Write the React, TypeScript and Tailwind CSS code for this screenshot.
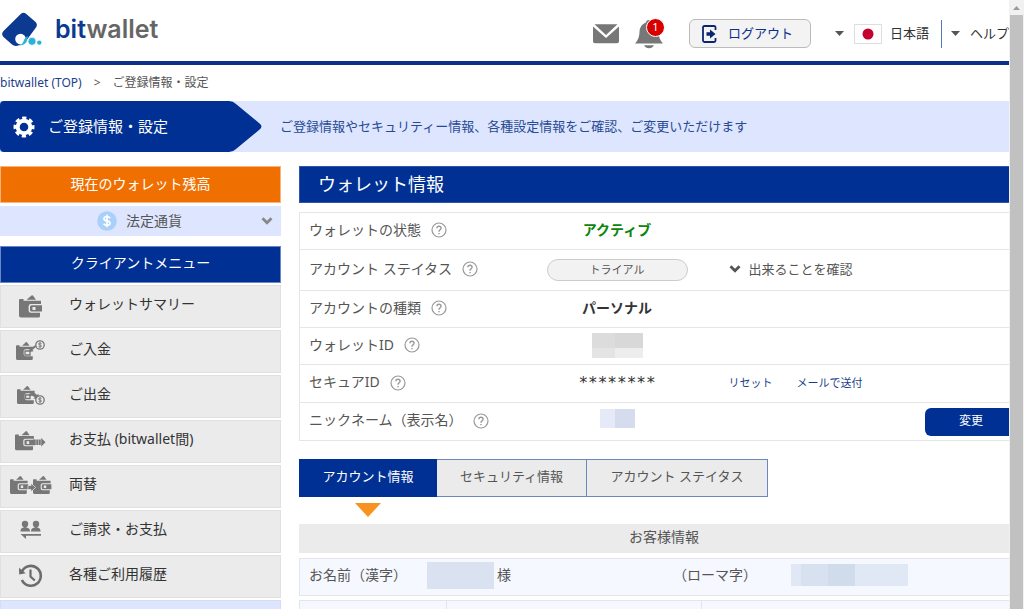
import React from "react";

const Wallet = ({ x = 0, y = 0, s = 1, notch = true }: { x?: number; y?: number; s?: number; notch?: boolean }) => (
  <g transform={`translate(${x} ${y}) scale(${s})`}>
    <path d="M7.500 4.800 12.500.4q.8-.6 1.400.2L17 4.800z" fill="#777" />
    <path d="M1 4H4.500V5.800H22V9H12q-2.400 0-2.400 2.400v4Q9.600 17.800 12 17.800H21V21q0 1.500-1.500 1.500H2Q0 22.500 0 20.500V5Q0 4 1 4z" fill="#777" />
    {notch && <path fillRule="evenodd" d="M12.500 10.300H23v6.300H12.500q-1.500 0-1.500-1.500v-3.300q0-1.500 1.500-1.500zM13.500 12v3h3v-3z" fill="#777" />}
  </g>
);

const Coin = ({ x, y }: { x: number; y: number }) => (
  <g transform={`translate(${x} ${y})`} fill="none" stroke="#777">
    <circle r="4.200" fill="#ebebeb" strokeWidth="1.300" />
    <path d="M1.500-1.400Q0-2.600-1.200-1.600-2-.4 0 0 2 .5 1.200 1.600 0 2.600-1.500 1.400M0-2.800V2.800" strokeWidth=".9" />
  </g>
);

const icons: Record<string, React.ReactNode> = {
  summary: <Wallet x={19} y={10} />,
  deposit: (
    <>
      <Wallet x={16} y={12} s={0.8} notch={false} />
      <path d="M25 21h5v4h-5z" fill="none" stroke="#777" strokeWidth="1.300" />
      <path d="m29 22 1-5 1.200 1.300 4.200-3.400 1.200 1.500-4.200 3.400 1.200 1.500z" fill="#777" />
      <Coin x={40} y={15} />
    </>
  ),
  withdraw: (
    <>
      <Wallet x={17} y={11} s={0.8} notch={false} />
      <path d="M25.500 20h4.500v3.500h-4.500z" fill="none" stroke="#777" strokeWidth="1.300" />
      <path d="M29 19q5-3 8 1l1.500-1.300.3 5.500-5.500-.6 1.500-1.400q-2.300-2.600-5.800-.7z" fill="#777" />
      <Coin x={40} y={25} />
    </>
  ),
  payment: (
    <>
      <Wallet x={15} y={11} s={0.86} />
      <path d="M33 19.500h8v-1.700l4.500 4.500-4.500 4.500v-1.700h-8z" fill="#777" />
      <path d="M36 19v7M38.500 19v7M41 18v9" stroke="#ebebeb" strokeWidth=".5" />
    </>
  ),
  exchange: (
    <>
      <Wallet x={10} y={11} s={0.8} />
      <Wallet x={33} y={11} s={0.8} />
      <path d="M28 20.500h3v-2.300l4.600 4.300-4.600 4.300v-2.300h-3z" fill="#777" stroke="#ebebeb" strokeWidth=".7" />
    </>
  ),
  billing: (
    <g fill="#777">
      <circle cx="25" cy="14" r="3.200" />
      <path d="M23.700 16h2.600v1.600q4 .7 3.700 3.900H20.500q-.3-3.200 3.200-3.900z" />
      <circle cx="36" cy="14" r="3.200" />
      <path d="M34.700 16h2.600v1.600q3.500.7 3.200 3.900H31q-.3-3.200 3.700-3.900zM20.500 24H41v1.800H26V29z" />
    </g>
  ),
  history: (
    <g fill="none" stroke="#6c6c6c" strokeWidth="2.600">
      <path d="M21.700 17.200A9.900 9.900 0 1 1 21.900 25" />
      <path d="m19 12.800.2 6.800 6.500-1.400z" fill="#6c6c6c" stroke="none" />
      <path d="M30.500 14.500v7l4.300 4" strokeWidth="2.200" />
    </g>
  ),
};

const menu = [
  ["summary", "ウォレットサマリー"],
  ["deposit", "ご入金"],
  ["withdraw", "ご出金"],
  ["payment", "お支払 (bitwallet間)"],
  ["exchange", "両替"],
  ["billing", "ご請求・お支払"],
  ["history", "各種ご利用履歴"],
];

const Help = () => (
  <button type="button" aria-label="ヘルプ" className="ml-2.5 inline-block align-middle">
    <svg width="16" height="16" viewBox="0 0 16 16" fill="none" stroke="#999" className="block">
      <circle cx="8" cy="8" r="7" strokeWidth="1.200" />
      <path d="M5.900 6.300Q6 4.200 8 4.200t2.100 1.900Q10.100 7.200 9 7.900 8 8.500 8 9.700M8 10.900v1.300" strokeWidth="1.400" />
    </svg>
  </button>
);

const Chevron = ({ color }: { color: string }) => (
  <svg width="12" height="8" viewBox="0 0 12 8" fill="none" stroke={color} strokeWidth="2.800">
    <path d="m1.500 1.300 4.500 4.500 4.500-4.500" />
  </svg>
);

const Caret = () => (
  <svg width="9" height="5" viewBox="0 0 9 5" fill="#555">
    <path d="M0 0h9L4.500 5z" />
  </svg>
);

const Row = ({ label, h, children, extra }: { label: string; h: string; children?: React.ReactNode; extra?: React.ReactNode }) => (
  <tr className={`border-b border-[#e6e6e6] ${h}`}>
    <th scope="row" className="pt-0 pb-[3px] pl-[9px] text-left font-normal whitespace-nowrap">
      <span className="align-middle">{label}</span>
      <Help />
    </th>
    <td className="pt-0 pb-0.5 text-center">{children}</td>
    <td className="pt-0 pr-[11px] pb-0.5 pl-[41px]">{extra}</td>
  </tr>
);

export default function App() {
  return (
    <div
      lang="ja"
      className="flex h-screen overflow-hidden bg-white font-['Noto_Sans','Noto_Sans_CJK_JP',sans-serif] text-sm leading-5 text-[#555]"
    >
      <div className="min-w-0 flex-1 overflow-hidden">
        <div className="min-w-[1029px]">
          <header className="flex h-[65px] items-center border-b-4 border-[#0c2f8c] pr-5 pb-1">
            <a href="#top" className="flex items-center" aria-label="bitwallet">
              <svg width="42" height="36" viewBox="0 0 42 36">
                <path d="M21 2.700Q23.500 1 26 2.700L35 10.500Q38 13 36.300 16L26 30 19.500 34Q15 36 12 33.500L3.500 26Q.8 23 3.500 20z" fill="#0b3a90" />
                <circle cx="20.500" cy="28" r="5.300" fill="#fff" />
                <path d="M18.500 34.500q4.500-1 5.500-5.500.8-3 4-4l-1.500 6q-2.500 3.500-8 3.500z" fill="#2db1d8" />
                <circle cx="32" cy="30.300" r="4" fill="#2db1d8" stroke="#fff" strokeWidth=".7" />
                <circle cx="39.300" cy="31.600" r="2.200" fill="#2db1d8" />
              </svg>
              <span className="ml-[13px] font-['Inter',sans-serif] text-[25px] leading-8 font-semibold text-[#666]">
                <span className="text-[#0b3a90]">bit</span>wallet
              </span>
            </a>
            <div className="ml-auto flex items-center pt-2.5">
              <a href="#mail" aria-label="メール">
                <svg width="26" height="20" viewBox="0 0 26 20" fill="#777">
                  <path d="M1.500.3H24.500L13 11zM0 2.500 13 14 26 2.500V17.500Q26 19.300 24 19.300H2Q0 19.300 0 17.500z" />
                </svg>
              </a>
              <a href="#notices" aria-label="お知らせ" className="relative ml-4">
                <svg width="28" height="30" viewBox="0 0 28 30" fill="#777">
                  <path d="M14 1Q17 1 17 3.500 23.500 6 23.500 13 23.500 20 28 24.500H0Q4.500 20 4.500 13 4.500 6 11 3.500 11 1 14 1zM9 26.300H19Q17.500 29.300 14 29.300T9 26.300z" />
                </svg>
                <span className="absolute -top-px left-[11px] flex size-[19px] items-center justify-center rounded-full border border-white bg-[#d90000] text-[11px] leading-3 text-white">
                  1
                </span>
              </a>
              <button
                type="button"
                className="ml-[26px] flex h-[29px] w-[122px] items-center rounded-md border border-[#bbb] bg-[#f3f3f3] pl-3 text-[13px] text-[#0c2f8c]"
              >
                <svg width="15" height="18" viewBox="0 0 15 18" fill="none" stroke="#0b2670" strokeWidth="1.800">
                  <path d="M13.500 5V2.500Q13.500 1 12 1H2.500Q1 1 1 2.500v13Q1 17 2.500 17H12q1.500 0 1.500-1.500V13" />
                  <path d="M4.500 7.200H8V4.500L13.500 9 8 13.500v-2.700H4.500z" fill="#0b2670" stroke="none" />
                </svg>
                <span className="ml-[11px] pb-px">ログアウト</span>
              </button>
              <button type="button" className="ml-6 flex items-center text-[13px] text-[#333]">
                <Caret />
                <svg width="28" height="20" viewBox="0 0 28 20" className="ml-2.5">
                  <path d="M.5.5h27v19H.5z" fill="#fff" stroke="#ddd" />
                  <circle cx="14" cy="10" r="5.500" fill="#c4002f" />
                </svg>
                <span className="ml-2 pb-0.5">日本語</span>
              </button>
              <span className="ml-3 h-7 w-px bg-[#5577bb]" />
              <button type="button" className="ml-[9px] flex items-center text-[13px] text-[#333]">
                <Caret />
                <span className="ml-2.5 pb-0.5">ヘルプ</span>
              </button>
            </div>
          </header>

          <nav className="flex h-9 items-center gap-3 pb-px text-xs">
            <a href="#top" className="text-[#1a3f8c]">
              bitwallet (TOP)
            </a>
            <span>&gt;</span>
            <span>ご登録情報・設定</span>
          </nav>

          <div className="flex h-[51px] items-center bg-[#dde6fe]">
            <h1 className="flex h-full w-[262px] items-center bg-[#003094] pl-[13px] text-[15px] text-white [clip-path:path('M4_0H229Q233_0_236_3L259_22Q264_25.5_259_29L236_48Q233_51_229_51H4Q0_51_0_47V4Q0_0_4_0Z')]">
              <svg width="22" height="22" viewBox="-11 -11 22 22" fill="none" stroke="#fff">
                <circle r="6.300" strokeWidth="4" />
                <circle r="9" strokeWidth="3" strokeDasharray="4.200 2.868" strokeDashoffset="2.100" />
              </svg>
              <span className="ml-[13px] pb-0.5">ご登録情報・設定</span>
            </h1>
            <p className="ml-[18px] pb-0.5 text-[13px] text-[#274a94]">
              ご登録情報やセキュリティー情報、各種設定情報をご確認、ご変更いただけます
            </p>
          </div>

          <div className="mt-[14px] flex">
            <aside className="w-[281px] shrink-0">
              <h2 className="flex h-[37px] items-center justify-center border border-[#f9b37c] bg-[#ef7000] pb-0.5 text-white">
                現在のウォレット残高
              </h2>
              <button type="button" className="mt-[3px] flex h-[30px] w-full items-center bg-[#dde6fe] pr-2 pl-[97px]">
                <svg width="20" height="20" viewBox="0 0 20 20">
                  <circle cx="10" cy="10" r="9.800" fill="#a9cffb" />
                  <path d="M13.200 7.200Q12 5.600 10 5.600 7 5.700 7 7.700q0 1.800 3 2.200t3.100 2.400Q13 14.300 10 14.400q-2.200 0-3.400-1.700M10 3.800v12.400" fill="none" stroke="#fff" strokeWidth="1.700" />
                </svg>
                <span className="ml-[9px] pb-px">法定通貨</span>
                <span className="ml-auto">
                  <Chevron color="#888" />
                </span>
              </button>
              <h2 className="mt-[10px] flex h-[37px] items-center justify-center border border-[#6a86c4] bg-[#003094] pb-[3px] text-white">
                クライアントメニュー
              </h2>
              <nav className="mt-[2px] flex flex-col gap-[2px]">
                {menu.map(([icon, label]) => (
                  <a
                    key={icon}
                    href={`#${icon}`}
                    className="flex h-[43px] items-center border border-[#e0e0e0] bg-[#ebebeb] text-[#333]"
                  >
                    <svg width="60" height="41" viewBox="1 1 60 41" className="shrink-0">
                      {icons[icon]}
                    </svg>
                    <span className="ml-2 pb-[5px]">{label}</span>
                  </a>
                ))}
                <div className="h-[43px] border border-[#d3ddf5] bg-[#dde6fe]" />
              </nav>
            </aside>

            <main className="ml-[18px] min-w-0 flex-1">
              <h2 className="flex h-[37px] items-center border border-[#3054a6] bg-[#003094] pb-0.5 pl-[18px] text-lg text-white">
                ウォレット情報
              </h2>
              <table className="mt-[9px] w-full table-fixed border-collapse border border-[#e6e6e6]">
                <colgroup>
                  <col className="w-[247px]" />
                  <col className="w-[141px]" />
                  <col />
                </colgroup>
                <tbody>
                  <Row label="ウォレットの状態" h="h-[37px]">
                    <span className="font-bold text-[#0b860b]">アクティブ</span>
                  </Row>
                  <Row
                    label="アカウント ステイタス"
                    h="h-[41px]"
                    extra={
                      <button type="button" className="flex items-center text-[13px]">
                        <Chevron color="#555" />
                        <span className="ml-2">出来ることを確認</span>
                      </button>
                    }
                  >
                    <span className="mt-0.5 flex h-[22px] items-center justify-center rounded-full border border-[#ccc] bg-[#f2f2f2] text-[11px]">
                      トライアル
                    </span>
                  </Row>
                  <Row label="アカウントの種類" h="h-[37px]">
                    <span className="font-bold text-[#333]">パーソナル</span>
                  </Row>
                  <Row label="ウォレットID" h="h-[37px]">
                    <span className="mx-auto grid h-[25px] w-[51px] grid-cols-[23px_28px] grid-rows-[15px_10px]">
                      <span className="bg-[#dcdcdc]" />
                      <span className="bg-[#d8d8d8]" />
                      <span className="bg-[#e4e4e4]" />
                      <span className="bg-[#ededed]" />
                    </span>
                  </Row>
                  <Row
                    label="セキュアID"
                    h="h-[38px]"
                    extra={
                      <span className="flex gap-6 text-[11px] text-[#1a3f8c]">
                        <a href="#reset">リセット</a>
                        <a href="#send">メールで送付</a>
                      </span>
                    }
                  >
                    <span className="font-['DejaVu_Sans_Mono',monospace] text-base leading-5 text-[#333]">********</span>
                  </Row>
                  <Row
                    label="ニックネーム（表示名）"
                    h="h-[38px]"
                    extra={
                      <button type="button" className="mt-0.5 ml-auto block h-7 w-[92px] rounded-md bg-[#003094] pb-0.5 text-xs text-white">
                        変更
                      </button>
                    }
                  >
                    <span className="mx-auto mb-1 flex h-[19px] w-[35px]">
                      <span className="w-[15px] bg-[#e6eaf8]" />
                      <span className="flex-1 bg-[#d5dcee]" />
                    </span>
                  </Row>
                </tbody>
              </table>

              <div role="tablist" className="mt-[18px] flex h-[38px] text-[13px]">
                <button type="button" role="tab" aria-selected="true" className="w-[138px] border border-[#003094] bg-[#003094] pb-1 text-white">
                  アカウント情報
                </button>
                <button type="button" role="tab" aria-selected="false" className="w-[150px] border-y border-r border-[#6c87bb] bg-[#ebebeb] pb-1">
                  セキュリティ情報
                </button>
                <button type="button" role="tab" aria-selected="false" className="w-[181px] border-y border-r border-[#6c87bb] bg-[#ebebeb] pb-1">
                  アカウント ステイタス
                </button>
              </div>
              <svg width="26" height="14" viewBox="0 0 26 14" fill="#f7931e" className="mt-[6px] ml-[56px] block">
                <path d="M0 0h26L13 14z" />
              </svg>

              <section className="mt-[7px]">
                <h3 className="flex h-[29px] items-center justify-center bg-[#ebebeb] pb-1">お客様情報</h3>
                <div className="mt-[5px] flex h-[38px] items-center border border-[#e2e5ec] bg-[#f5f8ff] pb-1 pl-[9px]">
                  <div className="flex w-[364px] items-center">
                    <span className="w-[118px]">お名前（漢字）</span>
                    <span className="h-[27px] w-[67px] bg-[#dae1f1]" />
                    <span className="ml-[3px]">様</span>
                  </div>
                  <span className="w-[118px]">（ローマ字）</span>
                  <span className="flex h-[22px] w-[117px]">
                    <span className="w-[10px] bg-[#e1e8f5]" />
                    <span className="w-[27px] bg-[#d8e1f0]" />
                    <span className="w-[27px] bg-[#d0dcec]" />
                    <span className="flex-1 bg-[#e1e8f5]" />
                  </span>
                </div>
                <div className="mt-[4px] flex h-[38px] border border-[#e2e5ec] bg-[#f5f8ff]">
                  <div className="w-[147px] border-r border-[#e2e5ec]" />
                  <div className="w-[255px] border-r border-[#e2e5ec]" />
                </div>
              </section>
            </main>
          </div>
        </div>
      </div>

      <div className="flex w-[15px] shrink-0 flex-col border-x border-[#f1f1f1] bg-[#f1f1f1]">
        <div className="flex h-[15px] items-center justify-center">
          <svg width="7" height="4" viewBox="0 0 7 4" fill="#999">
            <path d="M0 4h7L3.500 0z" />
          </svg>
        </div>
        <div className="flex-1 bg-[#c1c1c1]" />
      </div>
    </div>
  );
}
